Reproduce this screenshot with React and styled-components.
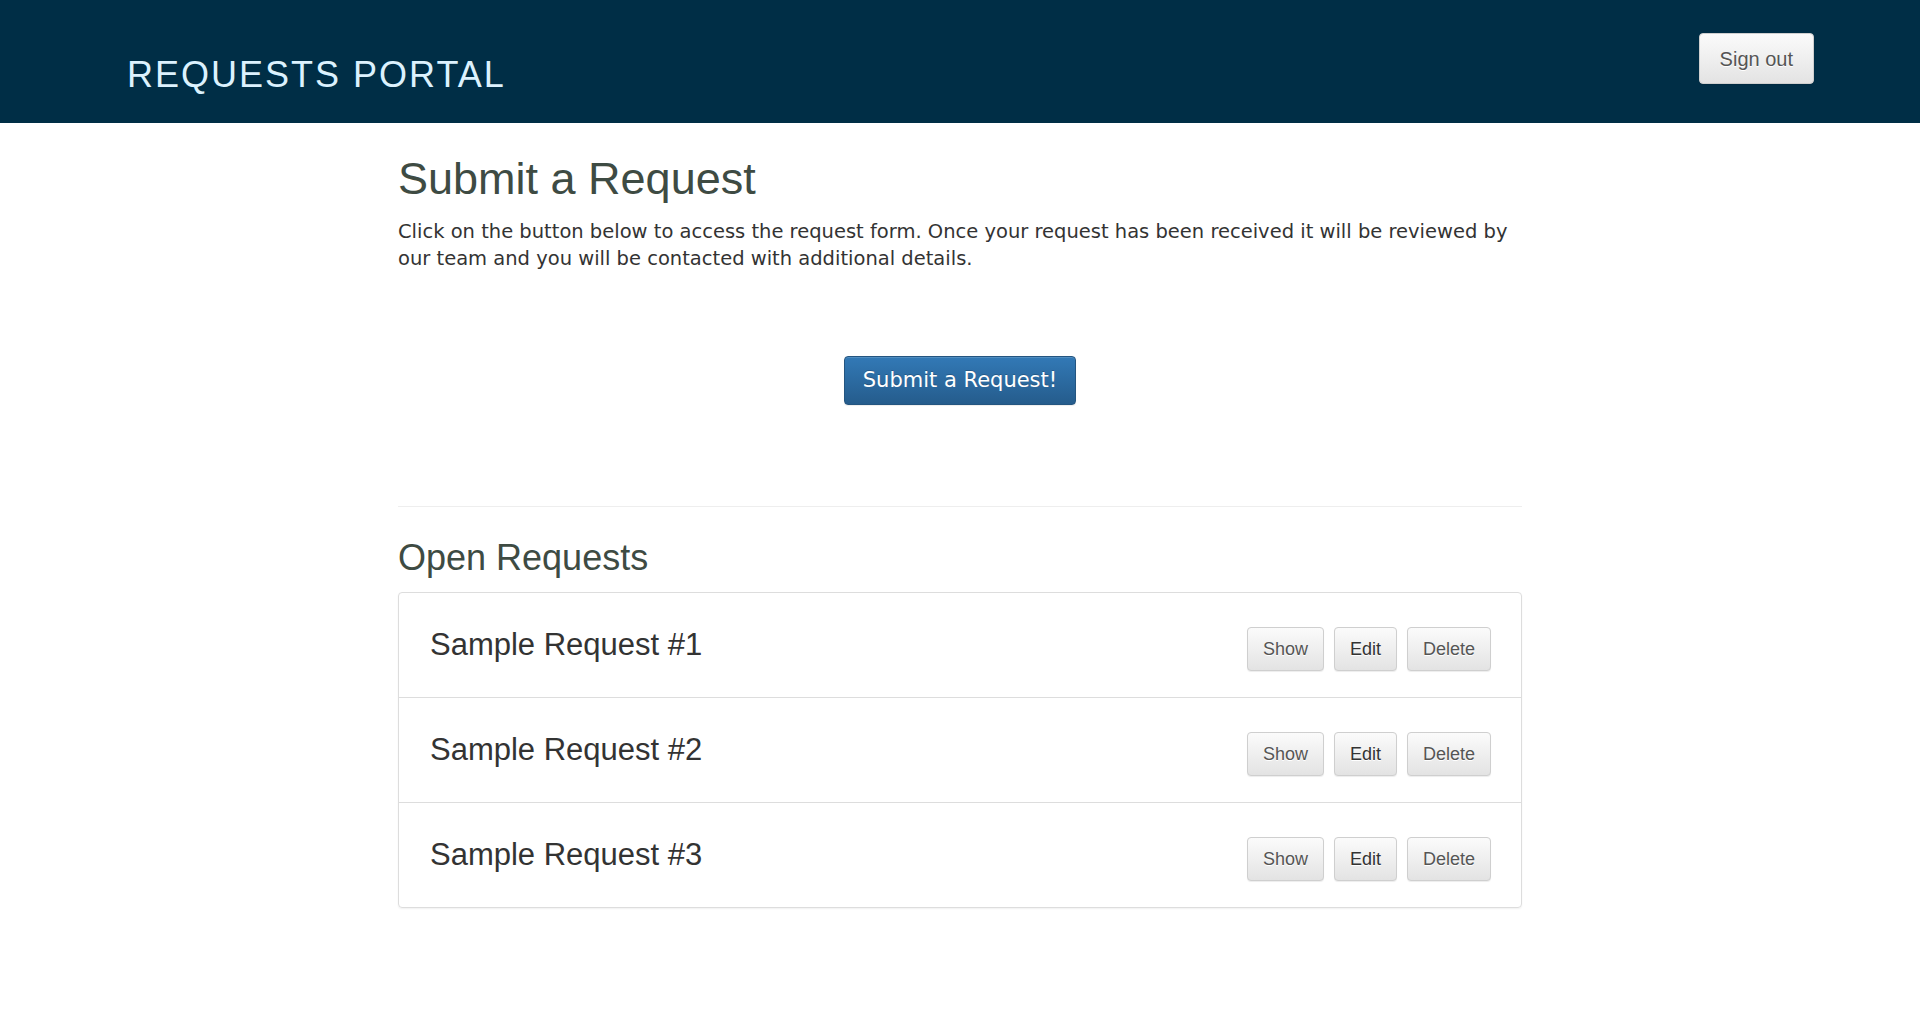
import React from 'react';
import styled, { createGlobalStyle } from 'styled-components';

const GlobalStyle = createGlobalStyle`
  html, body {
    margin: 0;
    padding: 0;
    background: #fff;
  }
  body {
    font-family: "Liberation Sans", Arial, sans-serif;
    color: #333;
  }
  * {
    box-sizing: border-box;
  }
`;

const Header = styled.header`
  height: 123px;
  background-color: #002e46;
  display: flex;
  justify-content: space-between;
  align-items: flex-start;
  padding: 0 106px 0 127px;
`;

const Brand = styled.a`
  margin-top: 55px;
  color: #dcf2fe;
  font-size: 36px;
  line-height: 1.1;
  letter-spacing: 2px;
  text-decoration: none;
`;

const Button = styled.button`
  font-family: "Liberation Sans", Arial, sans-serif;
  font-size: ${(p) => (p.$large ? '20px' : '18px')};
  line-height: ${(p) => (p.$large ? '28px' : '24px')};
  padding: ${(p) => (p.$large ? '10px 20px' : '9px 15px')};
  color: ${(p) => (p.$dark ? '#333' : '#555')};
  background-image: linear-gradient(to bottom, #fbfbfb 0, #e3e3e3 100%);
  border: 1px solid #cfcfcf;
  border-radius: 4px;
  text-shadow: 0 1px 0 #fff;
  box-shadow: inset 0 1px 0 rgba(255, 255, 255, 0.15), 0 1px 1px rgba(0, 0, 0, 0.075);
  cursor: pointer;
`;

const SignOut = styled(Button)`
  margin-top: 33px;
  height: 51px;
`;

const Main = styled.main`
  max-width: 1124px;
  margin: 0 auto;
  padding-top: 31px;
  padding-bottom: 60px;
`;

const Title = styled.h1`
  margin: 0;
  font-size: 45px;
  font-weight: 400;
  line-height: 1.1;
  color: #3e4b43;
`;

const Intro = styled.p`
  margin: 14px 0 0;
  font-family: "DejaVu Sans", Verdana, sans-serif;
  font-size: 19.5px;
  line-height: 27px;
  color: #333;
`;

const Center = styled.div`
  display: flex;
  justify-content: center;
  margin-top: 84px;
`;

const PrimaryButton = styled.button`
  width: 232px;
  height: 49px;
  font-family: "DejaVu Sans", Verdana, sans-serif;
  font-size: 21px;
  color: #fff;
  background-image: linear-gradient(to bottom, #3279b6 0, #255c8c 100%);
  border: 1px solid #245580;
  border-radius: 4px;
  text-shadow: 0 -1px 0 rgba(0, 0, 0, 0.2);
  box-shadow: inset 0 1px 0 rgba(255, 255, 255, 0.15), 0 1px 1px rgba(0, 0, 0, 0.075);
  cursor: pointer;
`;

const Divider = styled.hr`
  margin: 101px 0 0;
  border: 0;
  border-top: 1px solid #eee;
`;

const SectionTitle = styled.h2`
  margin: 31px 0 15px;
  font-size: 36px;
  font-weight: 400;
  line-height: 1.1;
  color: #3e4b43;
`;

const Panel = styled.div`
  border: 1px solid #ddd;
  border-radius: 4px;
  box-shadow: 0 1px 2px rgba(0, 0, 0, 0.06);
`;

const Row = styled.div`
  box-sizing: content-box;
  height: 104px;
  display: flex;
  align-items: center;
  justify-content: space-between;
  padding: 0 30px 0 31px;
  border-top: ${(p) => (p.$first ? 'none' : '1px solid #ddd')};
`;

const RowTitle = styled.div`
  font-size: 31px;
  color: #333;
`;

const Actions = styled.div`
  display: flex;
  gap: 10px;
  padding-top: 7px;
`;

const requests = ['Sample Request #1', 'Sample Request #2', 'Sample Request #3'];

export default function App() {
  return (
    <>
      <GlobalStyle />
      <Header>
        <Brand href="#">REQUESTS PORTAL</Brand>
        <SignOut $large>Sign out</SignOut>
      </Header>
      <Main>
        <Title>Submit a Request</Title>
        <Intro>
          Click on the button below to access the request form. Once your request has been received it will be reviewed by our team and you will be contacted with additional details.
        </Intro>
        <Center>
          <PrimaryButton>Submit a Request!</PrimaryButton>
        </Center>
        <Divider />
        <SectionTitle>Open Requests</SectionTitle>
        <Panel>
          {requests.map((name, i) => (
            <Row key={name} $first={i === 0}>
              <RowTitle>{name}</RowTitle>
              <Actions>
                <Button>Show</Button>
                <Button $dark>Edit</Button>
                <Button>Delete</Button>
              </Actions>
            </Row>
          ))}
        </Panel>
      </Main>
    </>
  );
}
